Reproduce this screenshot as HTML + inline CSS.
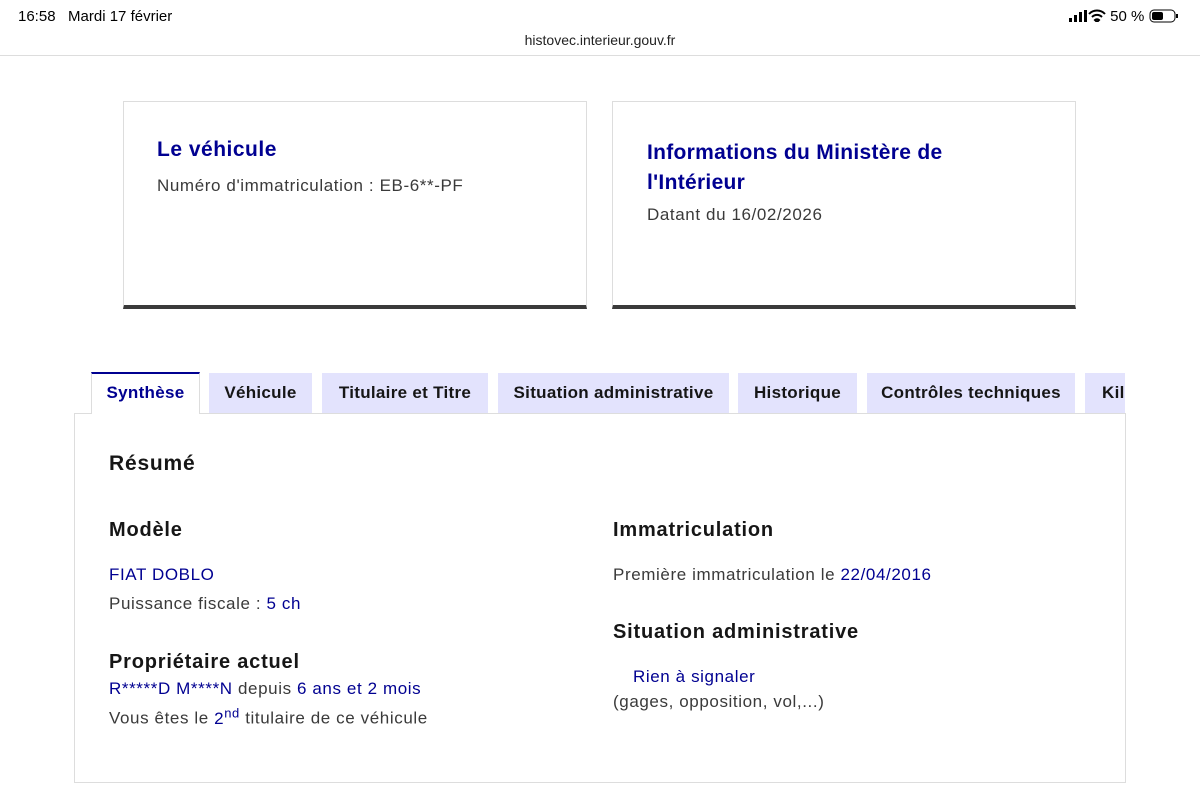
<!DOCTYPE html>
<html><head><meta charset="utf-8"><style>
*{margin:0;padding:0;box-sizing:border-box}
body{width:1200px;height:788px;overflow:hidden;background:#fff;font-family:"Liberation Sans",sans-serif;color:#3a3a3a;position:relative}
.a{position:absolute;white-space:nowrap}
.b{color:#000091}
.card{position:absolute;top:101px;height:208px;width:464px;border:1px solid #ddd;border-bottom:4px solid #3a3a3a;background:#fff}
.tab{position:absolute;top:373px;height:40px;background:#e3e3fd;font-size:17px;font-weight:bold;color:#161616;text-align:center;line-height:40px;letter-spacing:0.3px}
h3{position:absolute;font-size:20px;font-weight:bold;color:#161616;white-space:nowrap;letter-spacing:0.8px}
.t{position:absolute;font-size:17px;white-space:nowrap;letter-spacing:0.6px}
</style></head><body>
<div class="a" style="left:18px;top:8px;font-size:15px;color:#000">16:58&nbsp;&nbsp; Mardi 17 février</div>
<div class="a" style="left:1068px;top:8px;font-size:15px;color:#000">
<svg width="20" height="12" style="vertical-align:-1px"><rect x="1" y="8" width="3" height="4" fill="#000"/><rect x="6" y="5" width="3" height="7" fill="#000"/><rect x="11" y="2" width="3" height="10" fill="#000"/><rect x="16" y="0" width="3" height="12" fill="#000"/></svg><svg width="18" height="13" style="vertical-align:-1px"><path d="M1 5a11 11 0 0 1 16 0M4 8a7 7 0 0 1 10 0M7 11l2 2 2-2a3 3 0 0 0-4 0z" stroke="#000" stroke-width="2" fill="none"/></svg> 50 % <svg width="30" height="14" style="vertical-align:-2px"><rect x="1" y="1" width="25" height="12" rx="4" fill="none" stroke="#000" stroke-width="1"/><rect x="3" y="3" width="11" height="8" rx="2" fill="#000"/><rect x="27" y="5" width="2" height="4" fill="#000"/></svg></div>
<div class="a" style="left:0;width:1200px;text-align:center;top:32px;font-size:14px;color:#222">histovec.interieur.gouv.fr</div>
<div class="a" style="left:0;top:55px;width:1200px;height:1px;background:#ddd"></div>

<div class="card" style="left:123px">
<div class="a" style="left:33px;top:36px;font-size:21px;font-weight:bold;color:#000091;letter-spacing:0.5px">Le véhicule</div>
<div class="t" style="left:33px;top:74px">Numéro d'immatriculation : EB-6**-PF</div>
</div>
<div class="card" style="left:612px">
<div class="a" style="left:34px;top:36px;font-size:21px;font-weight:bold;color:#000091;line-height:30px;letter-spacing:0.3px">Informations du Ministère de<br>l'Intérieur</div>
<div class="t" style="left:34px;top:103px">Datant du 16/02/2026</div>
</div>

<div class="a" style="left:74px;top:413px;width:1052px;height:370px;border:1px solid #ddd"></div>
<div class="a" style="left:91px;top:372px;width:109px;height:42px;background:#fff;border-top:2px solid #000091;border-left:1px solid #ddd;border-right:1px solid #ddd;font-size:17px;font-weight:bold;color:#000091;text-align:center;line-height:38px;letter-spacing:0.3px">Synthèse</div>
<div class="tab" style="left:209px;width:103px">Véhicule</div>
<div class="tab" style="left:322px;width:166px">Titulaire et Titre</div>
<div class="tab" style="left:498px;width:231px">Situation administrative</div>
<div class="tab" style="left:738px;width:119px">Historique</div>
<div class="tab" style="left:867px;width:208px">Contrôles techniques</div>
<div class="tab" style="left:1085px;width:40px;text-align:left;padding-left:17px;overflow:hidden">Kilométrage</div>

<h3 style="left:109px;top:452px;font-size:21px">Résumé</h3>
<h3 style="left:109px;top:519px">Modèle</h3>
<div class="t b" style="left:109px;top:565px">FIAT DOBLO</div>
<div class="t" style="left:109px;top:594px">Puissance fiscale : <span class="b">5 ch</span></div>
<h3 style="left:109px;top:651px">Propriétaire actuel</h3>
<div class="t" style="left:109px;top:679px"><span class="b">R*****D M****N</span> depuis <span class="b">6 ans et 2 mois</span></div>
<div class="t" style="left:109px;top:705px">Vous êtes le <span class="b">2<sup style="font-size:13px">nd</sup></span> titulaire de ce véhicule</div>

<h3 style="left:613px;top:519px">Immatriculation</h3>
<div class="t" style="left:613px;top:565px">Première immatriculation le <span class="b">22/04/2016</span></div>
<h3 style="left:613px;top:621px">Situation administrative</h3>
<div class="t b" style="left:633px;top:667px">Rien à signaler</div>
<div class="t" style="left:613px;top:692px">(gages, opposition, vol,...)</div>
</body></html>
